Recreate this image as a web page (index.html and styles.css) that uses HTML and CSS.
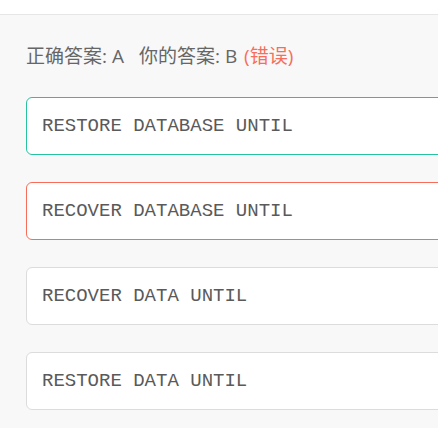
FILE: index.html
```html
<!DOCTYPE html>
<html lang="zh">
<head>
<meta charset="utf-8">
<link rel="stylesheet" href="styles.css">
</head>
<body>
<div class="topbar"></div>
<main class="content">
  <p class="answer">正确答案: A<span class="gap"></span>你的答案: B <span class="wrong">(错误)</span></p>
  <ul class="options">
    <li class="option correct">RESTORE DATABASE UNTIL</li>
    <li class="option error">RECOVER DATABASE UNTIL</li>
    <li class="option">RECOVER DATA UNTIL</li>
    <li class="option">RESTORE DATA UNTIL</li>
  </ul>
</main>
</body>
</html>
```
FILE: styles.css
```css
html, body {
  margin: 0;
  padding: 0;
  background: #f8f8f8;
  overflow: hidden;
}
.topbar {
  height: 14px;
  background: #fff;
  border-bottom: 1px solid #e6e6e6;
}
.content {
  padding: 0 0 0 26px;
}
.answer {
  margin: 0;
  padding-top: 28px;
  height: 26px;
  line-height: 26px;
  font-family: "Open Sans", "Noto Sans CJK SC", sans-serif;
  font-size: 19px;
  color: #666;
}
.gap {
  display: inline-block;
  width: 15px;
}
.wrong {
  color: #f76d5a;
  margin-left: 2px;
}
.options {
  list-style: none;
  margin: 28px 0 0 0;
  padding: 0;
  display: flex;
  flex-direction: column;
  gap: 27px;
}
.option {
  width: 460px;
  box-sizing: border-box;
  height: 58px;
  display: flex;
  align-items: center;
  padding-left: 15px;
  background: #fff;
  border: 1px solid #dcdcdc;
  border-radius: 6px;
  font-family: "Liberation Mono", "Courier New", monospace;
  font-size: 19px;
  color: #5a5a5a;
}
.option.correct {
  border-color: #27c2a0;
}
.option.error {
  border-color: #f76d5a;
}
```
